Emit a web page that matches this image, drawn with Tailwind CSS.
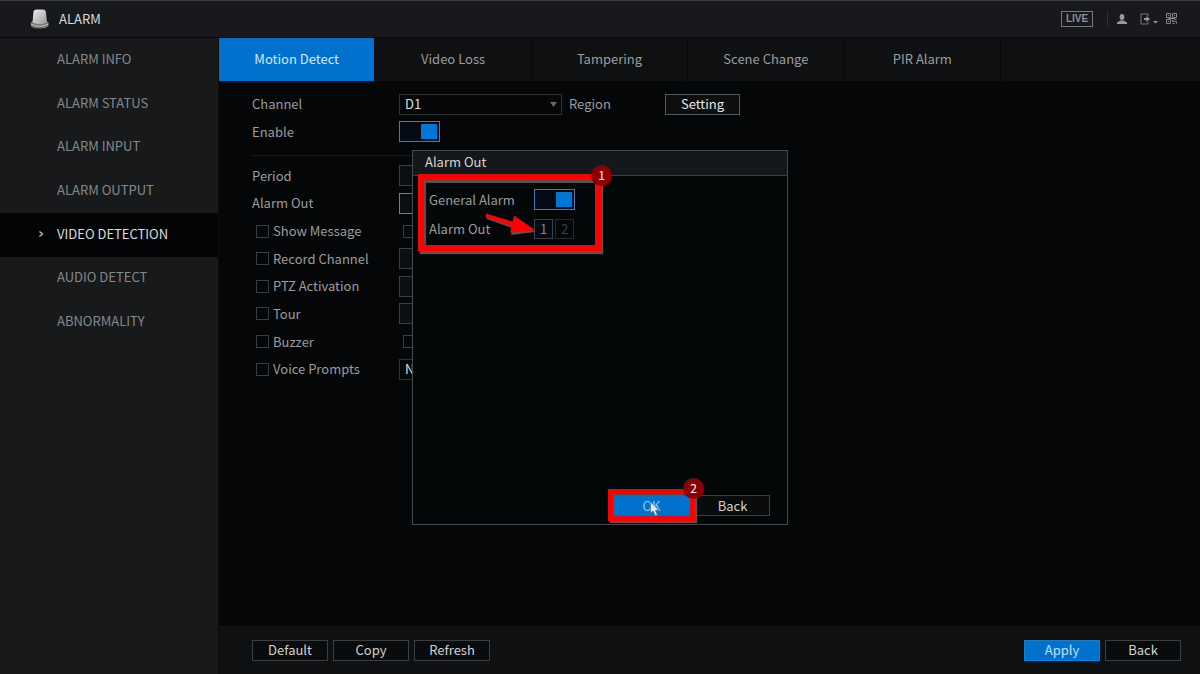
<!DOCTYPE html>
<html lang="en">
<head>
<meta charset="utf-8">
<meta name="viewport" content="width=device-width, initial-scale=1">
<title>Alarm - Video Detection</title>
<script src="https://cdn.jsdelivr.net/npm/@tailwindcss/browser@4"></script>
</head>
<body class="relative flex min-h-screen flex-col bg-[#040607] font-['Noto_Sans_CJK_SC',sans-serif] text-[13px] leading-5 text-[#9b9d9e]">

<header class="flex h-[38px] items-center border-t border-b border-t-[#3a3c3e] border-b-[#08090a] bg-[#17191c] pr-[23px] pb-px pl-[30px]">
  <svg class="h-5 w-5" viewBox="0 0 20 20" aria-hidden="true">
    <defs>
      <linearGradient id="dome" x1="0" x2="1" y1="0" y2="1"><stop offset="0" stop-color="#eee"/><stop offset="1" stop-color="#999"/></linearGradient>
    </defs>
    <path d="M.8 14 Q1 12 4 12 H15 Q18.200 12 18.500 14 V17 Q17 19.500 9.700 19.500 Q2 19.500 .8 17Z" fill="#747576"/>
    <path d="M1 15 Q9.700 19.500 18.400 15" fill="none" stroke="#c9c9c9" stroke-width="1"/>
    <path d="M3.500 2.500 Q4 .5 6.500 .5 H13 Q15.500 .5 15.800 2.500 L17 13.500 Q9.700 17 2.500 13.500Z" fill="url(#dome)"/>
  </svg>
  <h1 class="ml-[9px] text-[#d8dadb]">ALARM</h1>
  <div class="ml-auto flex items-center">
    <button class="h-4 w-8 border border-[#77797b] font-['Liberation_Sans',sans-serif] text-[10px] leading-[14px] font-bold text-[#8e9092]">LIVE</button>
    <span class="ml-[14px] h-4 w-px bg-[#303234]"></span>
    <button class="ml-2" aria-label="User">
      <svg class="h-3 w-3" viewBox="0 0 12 12" fill="#98999b"><ellipse cx="6" cy="4" rx="2.400" ry="3"/><path d="M1 11V9.500L4.500 7.500H7.500L11 9.500V11Z"/></svg>
    </button>
    <button class="ml-3" aria-label="Log out">
      <svg class="h-3 w-[18px]" viewBox="0 0 18 12"><path d="M8 3V1H1V11H8V9" fill="none" stroke="#77797b"/><path d="M4 5H6.500V3L10 6L6.500 9V7H4Z" fill="#98999b"/><path d="M13 8H18L15.500 10.500Z" fill="#98999b"/></svg>
    </button>
    <button class="ml-2" aria-label="QR code">
      <svg class="h-[11px] w-[11px]" viewBox="0 0 11 11" fill="none" stroke="#85878a"><path d="M.5 .5H4.500V4.500H.5ZM6.500 .5H10.500V4.500H6.500ZM.5 6.500H4.500V10.500H.5ZM2 2.500H3M8 2.500H9M2 8.500H3M2.500 5.500H9M6.500 6.500V8.500H10.500V10.500M6.500 10.500H8.500M8.500 6.500H10.500"/></svg>
    </button>
  </div>
</header>

<div class="flex flex-1">
  <nav class="w-[219px] shrink-0 border-r border-r-[#0b0c0d] bg-[#17191b]" aria-label="Alarm">
    <ul class="flex h-[306px] flex-col text-[#85888a]">
      <li class="flex flex-1"><a href="#" class="flex flex-1 items-center pb-0.5 pl-[57px]">ALARM INFO</a></li>
      <li class="flex flex-1"><a href="#" class="flex flex-1 items-center pb-0.5 pl-[57px]">ALARM STATUS</a></li>
      <li class="flex flex-1"><a href="#" class="flex flex-1 items-center pb-0.5 pl-[57px]">ALARM INPUT</a></li>
      <li class="flex flex-1"><a href="#" class="flex flex-1 items-center pb-0.5 pl-[57px]">ALARM OUTPUT</a></li>
      <li class="flex flex-1"><a href="#" aria-current="page" class="flex flex-1 items-center bg-[#030405] pb-0.5 pl-[38px] text-[#dcddde]">
        <svg class="mr-[13px] h-[6px] w-[6px]" viewBox="0 0 6 6" aria-hidden="true"><path d="M1.500 .5L4.500 3L1.500 5.500" fill="none" stroke="#c6c7c8" stroke-width="1.200"/></svg>VIDEO DETECTION</a></li>
      <li class="flex flex-1"><a href="#" class="flex flex-1 items-center pb-0.5 pl-[57px]">AUDIO DETECT</a></li>
      <li class="flex flex-1"><a href="#" class="flex flex-1 items-center pb-0.5 pl-[57px]">ABNORMALITY</a></li>
    </ul>
  </nav>

  <main class="flex min-w-0 flex-1 flex-col">
    <div class="h-[43px] bg-[#0e1011]">
      <div class="grid h-full w-[782px] grid-cols-5" role="tablist">
        <button role="tab" aria-selected="true" class="border-r border-[#070809] bg-[#0072ce] pb-0.5 text-[#dceaf5]">Motion Detect</button>
        <button role="tab" class="border-r border-[#070809] pb-0.5">Video Loss</button>
        <button role="tab" class="border-r border-[#070809] pb-0.5">Tampering</button>
        <button role="tab" class="border-r border-[#070809] pb-0.5">Scene Change</button>
        <button role="tab" class="border-r border-[#070809] pb-0.5">PIR Alarm</button>
      </div>
    </div>

    <form class="flex-1 px-[33px] pt-[9px]">
      <div class="flex h-7 items-center">
        <label for="channel" class="w-[147px]">Channel</label>
        <div class="relative">
          <select id="channel" class="block h-[21px] w-[163px] appearance-none border border-[#303234] bg-[#040607] pl-[5px] leading-4 text-[#dfe0e1]"><option>D1</option></select>
          <svg class="pointer-events-none absolute top-2 right-[5px] h-[5px] w-[7px]" viewBox="0 0 7 5" aria-hidden="true"><path d="M0 0H7L3.500 5Z" fill="#66686a"/></svg>
        </div>
        <label for="region" class="ml-[7px] w-[96px]">Region</label>
        <button id="region" type="button" class="h-[21px] w-[75px] border border-[#53585a] bg-[#0c0e10] leading-4 text-[#e6e7e8]">Setting</button>
      </div>
      <div class="flex h-[27px] items-center">
        <label for="enable" class="w-[147px]">Enable</label>
        <input id="enable" type="checkbox" role="switch" checked class="flex h-[21px] w-[41px] appearance-none justify-end border border-[#4a78b4] bg-[#050b16] p-0.5 before:h-full before:w-4 before:bg-[#0077d5]">
      </div>
      <hr class="mt-[10px] w-[400px] border-[#17191a]">
      <div class="mt-[6px] flex h-[221px] flex-col">
        <div class="flex flex-1 items-center"><span class="w-[147px]">Period</span><button aria-label="Period setting" type="button" class="h-[21px] w-[75px] border border-[#3c3f41] bg-[#0c0e10]"></button></div>
        <div class="flex flex-1 items-center"><span class="w-[147px]">Alarm Out</span><button aria-label="Alarm out setting" type="button" class="h-[21px] w-[75px] border border-[#7a7c7e] bg-[#0c0e10]"></button></div>
        <div class="flex flex-1 items-center"><label class="flex w-[151px] items-center gap-1 pl-1"><input type="checkbox" class="h-[13px] w-[13px] appearance-none border border-[#3b3e40]">Show Message</label><input type="checkbox" aria-label="Email" class="h-[13px] w-[13px] appearance-none border border-[#3b3e40]"></div>
        <div class="flex flex-1 items-center"><label class="flex w-[147px] items-center gap-1 pl-1"><input type="checkbox" class="h-[13px] w-[13px] appearance-none border border-[#3b3e40]">Record Channel</label><button aria-label="Record channel setting" type="button" class="h-[21px] w-[75px] border border-[#3c3f41] bg-[#0c0e10]"></button></div>
        <div class="flex flex-1 items-center"><label class="flex w-[147px] items-center gap-1 pl-1"><input type="checkbox" class="h-[13px] w-[13px] appearance-none border border-[#3b3e40]">PTZ Activation</label><button aria-label="PTZ setting" type="button" class="h-[21px] w-[75px] border border-[#3c3f41] bg-[#0c0e10]"></button></div>
        <div class="flex flex-1 items-center"><label class="flex w-[147px] items-center gap-1 pl-1"><input type="checkbox" class="h-[13px] w-[13px] appearance-none border border-[#3b3e40]">Tour</label><button aria-label="Tour setting" type="button" class="h-[21px] w-[75px] border border-[#3c3f41] bg-[#0c0e10]"></button></div>
        <div class="flex flex-1 items-center"><label class="flex w-[151px] items-center gap-1 pl-1"><input type="checkbox" class="h-[13px] w-[13px] appearance-none border border-[#3b3e40]">Buzzer</label><input type="checkbox" aria-label="Log" class="h-[13px] w-[13px] appearance-none border border-[#3b3e40]"></div>
        <div class="flex flex-1 items-center"><label class="flex w-[147px] items-center gap-1 pl-1"><input type="checkbox" class="h-[13px] w-[13px] appearance-none border border-[#3b3e40]">Voice Prompts</label><select aria-label="Voice file" class="block h-[21px] w-[163px] appearance-none border border-[#303234] bg-[#040607] pl-[5px] leading-4 text-[#dfe0e1]"><option>None</option></select></div>
      </div>
    </form>

    <footer class="flex h-12 items-center gap-[5px] border-t border-[#121415] bg-[#0e1011] pr-[19px] pb-px pl-[33px] text-[#d2d3d4]">
      <button class="h-[21px] w-[76px] border border-[#3c3f41] bg-[#090b0c] leading-4">Default</button>
      <button class="h-[21px] w-[76px] border border-[#3c3f41] bg-[#090b0c] leading-4">Copy</button>
      <button class="h-[21px] w-[76px] border border-[#3c3f41] bg-[#090b0c] leading-4">Refresh</button>
      <button class="ml-auto h-[21px] w-[76px] border border-[#0f7fd6] bg-[#0072ce] leading-4 text-[#c4e0f4]">Apply</button>
      <button class="h-[21px] w-[76px] border border-[#3c3f41] bg-[#090b0c] leading-4">Back</button>
    </footer>
  </main>
</div>

<section role="dialog" aria-labelledby="dlg" class="absolute top-[150px] left-[412px] flex h-[375px] w-[376px] flex-col border border-[#46494b] bg-[#030708]">
  <h2 id="dlg" class="h-[25px] border-b border-[#3b3e40] bg-[#15181b] pl-3 leading-[22px] text-[#d6d7d8]">Alarm Out</h2>
  <div class="flex flex-1 flex-col gap-[9px] pt-[13px] pl-4">
    <div class="flex h-[21px] items-center">
      <label for="general" class="w-[105px]">General Alarm</label>
      <input id="general" type="checkbox" role="switch" checked class="flex h-[21px] w-[41px] appearance-none justify-end border border-[#4a78b4] bg-[#050b16] p-0.5 before:h-full before:w-4 before:bg-[#0077d5]">
    </div>
    <div class="flex h-5 items-center">
      <span class="w-[105px]">Alarm Out</span>
      <button class="h-5 w-[19px] border border-[#3b4149] bg-[#050a12] leading-4 text-[#7784a0]">1</button>
      <button class="ml-[2px] h-5 w-[19px] border border-[#26292b] bg-[#040707] leading-4 text-[#3f4244]">2</button>
    </div>
  </div>
  <div class="flex justify-end gap-[5px] pr-[17px] pb-2">
    <button class="h-[21px] w-[77px] bg-[#0072ce] leading-4 text-[#8fc9ee]">OK</button>
    <button class="h-[21px] w-[75px] border border-[#3c3f41] bg-[#090b0c] leading-4 text-[#d2d3d4]">Back</button>
  </div>
</section>

<div class="pointer-events-none absolute top-[174px] left-[418px] h-[77px] w-[183px] border-6 border-[#ff0000] shadow-[2px_3px_1px_#555,inset_2px_3px_1px_#555]"></div>
<div class="pointer-events-none absolute top-[489px] left-[608px] h-8 w-[87px] border-5 border-[#ff0000] shadow-[2px_2px_1px_#555,inset_1px_1px_1px_#555]"></div>
<svg class="pointer-events-none absolute top-[210px] left-[482px] h-8 w-14" viewBox="0 0 56 32" aria-hidden="true">
  <path d="M5 5.500L31.500 13.500L33 8L53 22L29 25L30.500 18L4.500 9Z" fill="#555"/>
  <path d="M4 3.500L30.500 11.500L32 5.500L53 20L28 22.500L29.500 16L3.500 7Z" fill="#f00"/>
</svg>
<span class="absolute top-[165px] left-[591px] flex h-[21px] w-[21px] items-center justify-center rounded-full bg-[#8b0000] pb-px text-xs leading-4 text-white">1</span>
<span class="absolute top-[478px] left-[683px] flex h-[21px] w-[21px] items-center justify-center rounded-full bg-[#8b0000] pb-px text-xs leading-4 text-white">2</span>
<svg class="pointer-events-none absolute top-[501px] left-[650px] h-4 w-[10px]" viewBox="0 0 10 16" aria-hidden="true"><path d="M.5 .5V12.500L3 10L5.500 15L7.500 14L5.500 9.500H9Z" fill="#e3e8ec" stroke="#305f88" stroke-width=".7"/></svg>
</body>
</html>
